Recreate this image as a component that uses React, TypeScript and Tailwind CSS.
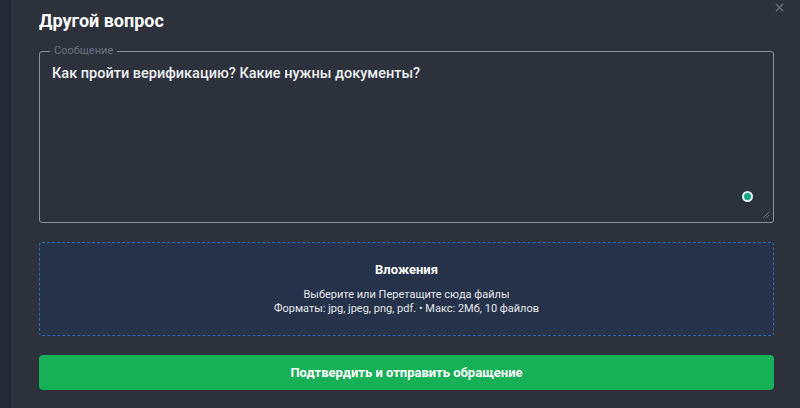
import { X } from 'lucide-react'

const App = () => {
  return (
    <div className="flex h-[408px] w-[800px] overflow-hidden bg-[#242936] font-['Roboto',sans-serif]">
      <div className="relative ml-[11px] flex flex-1 flex-col bg-[#2c313c] pl-[28px] pr-[26px] pt-[9px]">
        {/* Close */}
        <button className="absolute right-[14px] top-[1px] text-[#6b717c]">
          <X className="h-[13px] w-[13px]" strokeWidth={2.5} />
        </button>

        <h2 className="text-[18px] font-bold leading-[24px] text-white">Другой вопрос</h2>

        {/* Message */}
        <div className="relative mt-[18px] h-[172px] rounded-[3px] border border-[#8b909a] px-[12px] pt-[13px]">
          <span className="absolute -top-[7px] left-[10px] bg-[#2c313c] px-[4px] text-[11px] leading-[12px] text-[#6b717c]">
            Сообщение
          </span>
          <p className="text-[14.5px] font-medium leading-[18px] text-[#eef0f3]">
            Как пройти верификацию? Какие нужны документы?
          </p>
          <span className="absolute bottom-[20px] right-[20px] h-[11px] w-[11px] rounded-full border-2 border-[#dff5ef] bg-[#12a48a]" />
          <svg className="absolute bottom-[3px] right-[3px] h-[9px] w-[9px] text-[#6b717c]" viewBox="0 0 9 9">
            <path d="M8 2L2 8M8 5L5 8" stroke="currentColor" strokeWidth="1" />
          </svg>
        </div>

        {/* Attachments */}
        <div className="mt-[19px] flex h-[94px] flex-col items-center justify-center rounded-[3px] border border-dashed border-[#3068b0] bg-[#263249] text-white">
          <div className="text-[13px] font-bold leading-[15px]">Вложения</div>
          <div className="mt-[11px] text-[11px] leading-[14px] text-[#e4e7ec]">Выберите или Перетащите сюда файлы</div>
          <div className="text-[11px] leading-[14px] text-[#e4e7ec]">Форматы: jpg, jpeg, png, pdf. • Макс: 2Мб, 10 файлов</div>
        </div>

        <button className="mt-[19px] h-[35px] w-full rounded-[4px] bg-[#16b057] text-[13px] font-bold text-white">
          Подтвердить и отправить обращение
        </button>
      </div>
    </div>
  )
}

export default App
